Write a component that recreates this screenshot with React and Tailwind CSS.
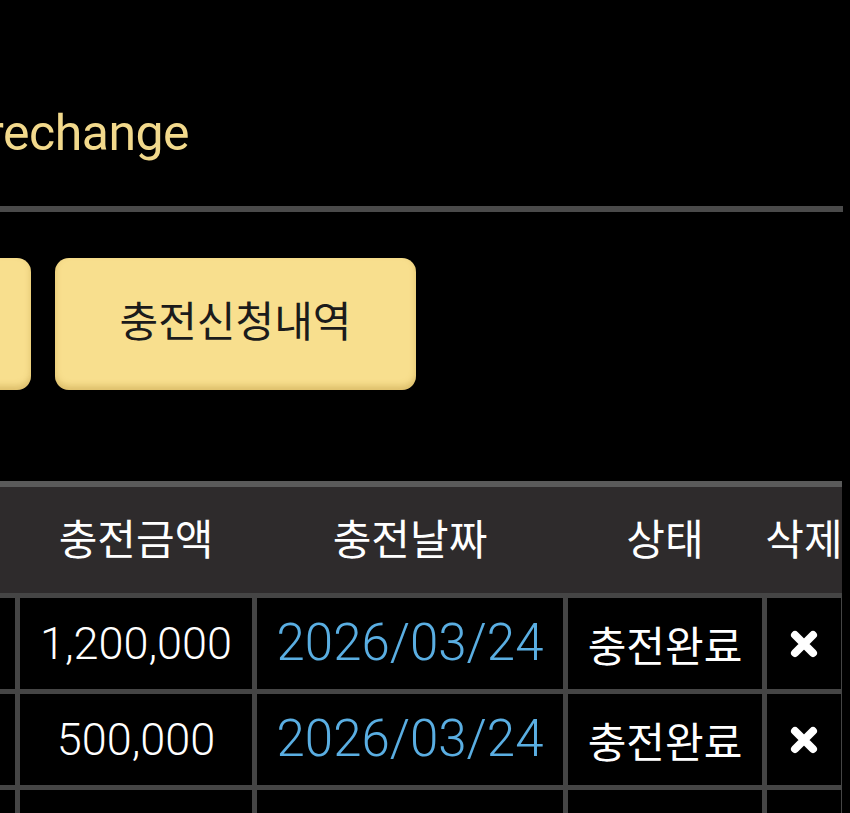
import React from 'react';

const rows = [
  { id: 1, amount: '1,200,000', date: '2026/03/24', status: '충전완료' },
  { id: 2, amount: '500,000', date: '2026/03/24', status: '충전완료' },
  { id: 3, amount: '300,000', date: '2026/03/24', status: '충전완료' },
];

const cols = 'grid grid-cols-[15px_232px_306px_194px_74px] gap-x-[5px]';

const DeleteIcon = () => (
  <svg width="28" height="28" viewBox="0 0 28 28">
    <path d="M5 5 L23 23 M23 5 L5 23" stroke="#fff" strokeWidth="8" strokeLinecap="round" />
  </svg>
);

const App = () => {
  return (
    <div className="min-h-screen w-full bg-black overflow-hidden font-['Noto_Sans_CJK_KR',sans-serif]">
      {/* Title */}
      <div className="h-[206px] pt-[108px]">
        <h1 className="ml-[-13px] text-[50px] leading-[50px] tracking-[-0.5px] text-[#f2d98c] font-['Roboto',sans-serif] whitespace-nowrap">
          rechange
        </h1>
      </div>
      <div className="h-[6px] w-[843px] bg-[#4a4a4a]" />

      {/* Tabs */}
      <div className="flex gap-[24px] ml-[-330px] mt-[46px]">
        <button className="w-[361px] h-[132px] pb-[10px] rounded-[14px] bg-[#f8df8e] shadow-[inset_0_-4px_6px_rgba(170,130,40,0.35)] text-[42px] leading-[60px] text-[#1b1b1b]">
          충전신청
        </button>
        <button className="w-[361px] h-[132px] pb-[10px] rounded-[14px] bg-[#f8df8e] shadow-[inset_0_-4px_6px_rgba(170,130,40,0.35)] text-[42px] leading-[60px] text-[#1b1b1b]">
          충전신청내역
        </button>
      </div>

      {/* Table */}
      <div className="mt-[91px] w-[842px] bg-[#454545]">
        <div className={`${cols} h-[112px] pb-[6px] border-t-[6px] border-[#5a5a5a] bg-[#2e2b2c] text-white text-[42px] leading-[60px] items-center whitespace-nowrap`}>
          <div />
          <div className="flex justify-center">충전금액</div>
          <div className="flex justify-center">충전날짜</div>
          <div className="flex justify-center">상태</div>
          <div className="flex justify-center">삭제</div>
        </div>
        <div className={`${cols} gap-y-[5px] pt-[5px] pr-[1px]`}>
          {rows.map(row => (
            <React.Fragment key={row.id}>
              <div className="h-[91px] bg-black" />
              <div className="h-[91px] bg-black flex items-center justify-center text-white text-[45px] font-light font-['Roboto',sans-serif]">
                {row.amount}
              </div>
              <div className="h-[91px] bg-black flex items-center justify-center text-[#5aaee2] text-[51px] font-light font-['Roboto',sans-serif]">
                {row.date}
              </div>
              <div className="h-[91px] bg-black flex items-center justify-center text-white text-[42px] whitespace-nowrap">
                {row.status}
              </div>
              <div className="h-[91px] bg-black flex items-center justify-center">
                <DeleteIcon />
              </div>
            </React.Fragment>
          ))}
        </div>
      </div>
    </div>
  );
};

export default App;
